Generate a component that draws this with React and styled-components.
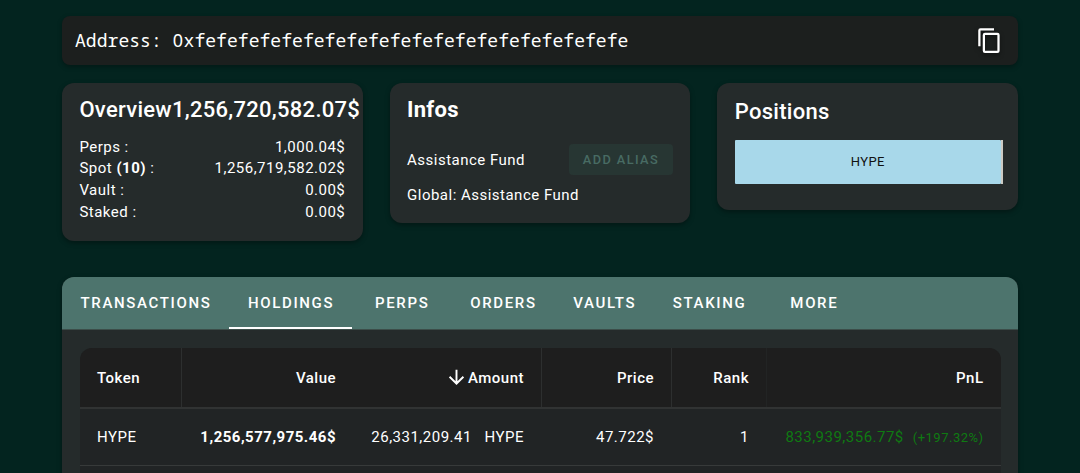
import React from 'react';
import styled, { createGlobalStyle } from 'styled-components';

// Data
const balances = [
  { label: 'Perps :', value: '1,000.04$' },
  { label: 'Spot', count: '(10)', value: '1,256,719,582.02$' },
  { label: 'Vault :', value: '0.00$' },
  { label: 'Staked :', value: '0.00$' },
];

const tabs = ['Transactions', 'Holdings', 'Perps', 'Orders', 'Vaults', 'Staking', 'More'];

const App = () => {
  return (
    <>
      <GlobalStyle />
      <StylePage>
        <StyleAddress>
          <StyleHash>
            Address: <StyleZero>0</StyleZero>xfefefefefefefefefefefefefefefefefefefefe
          </StyleHash>
          <StyleCopy aria-label='Copy address'>
            <svg viewBox='0 0 24 24' width='27' height='27'>
              <path
                fill='currentColor'
                d='M19,21H8V7H19M19,5H8A2,2 0 0,0 6,7V21A2,2 0 0,0 8,23H19A2,2 0 0,0 21,21V7A2,2 0 0,0 19,5M16,1H4A2,2 0 0,0 2,3V17H4V3H16V1Z'
              />
            </svg>
          </StyleCopy>
        </StyleAddress>

        <StyleCards>
          <StyleCard $height={158}>
            <StyleTitle>
              <span>Overview</span>
              <span>1,256,720,582.07$</span>
            </StyleTitle>
            <StyleBalances>
              {balances.map((b) => (
                <StyleBalance key={b.label}>
                  <span>
                    {b.label}
                    {b.count && (
                      <>
                        {' '}
                        <b>{b.count}</b> :
                      </>
                    )}
                  </span>
                  <span>{b.value}</span>
                </StyleBalance>
              ))}
            </StyleBalances>
          </StyleCard>

          <StyleCard $height={140}>
            <StyleTitle $bold>Infos</StyleTitle>
            <StyleAlias>
              <span>Assistance Fund</span>
              <StyleButton disabled>Add alias</StyleButton>
            </StyleAlias>
            <StyleGlobal>Global: Assistance Fund</StyleGlobal>
          </StyleCard>

          <StyleCard $height={127}>
            <StyleTitle $low>Positions</StyleTitle>
            <StyleTreemap>
              <StyleTile>HYPE</StyleTile>
              <StyleSliver />
            </StyleTreemap>
          </StyleCard>
        </StyleCards>

        <StylePanel>
          <StyleTabs>
            {tabs.map((tab) => (
              <StyleTab key={tab} $active={tab === 'Holdings'}>
                {tab}
              </StyleTab>
            ))}
          </StyleTabs>
          <StyleTable>
            <StyleHead>
              <StyleCell $first $line>Token</StyleCell>
              <StyleCell>Value</StyleCell>
              <StyleCell $line>
                <svg viewBox='0 0 24 24' width='23' height='23'>
                  <path
                    fill='currentColor'
                    d='M11,4H13V16L18.5,10.5L19.92,11.92L12,19.84L4.08,11.92L5.5,10.5L11,16V4Z'
                  />
                </svg>
                Amount
              </StyleCell>
              <StyleCell $line>Price</StyleCell>
              <StyleCell $faint>Rank</StyleCell>
              <StyleCell>PnL</StyleCell>
            </StyleHead>
            <StyleRow>
              <StyleCell $first>HYPE</StyleCell>
              <StyleCell>
                <b>1,256,577,975.46$</b>
              </StyleCell>
              <StyleCell>
                26,331,209.41 <StyleUnit>HYPE</StyleUnit>
              </StyleCell>
              <StyleCell>47.722$</StyleCell>
              <StyleCell>1</StyleCell>
              <StyleCell $gain>
                833,939,356.77$ <StylePercent>(+197.32%)</StylePercent>
              </StyleCell>
            </StyleRow>
            <StyleRow />
          </StyleTable>
        </StylePanel>
      </StylePage>
    </>
  );
};

const GlobalStyle = createGlobalStyle`
  * {
    box-sizing: border-box;
  }
  body {
    margin: 0;
    background: #03241f;
    color: #fff;
    font-family: Roboto, sans-serif;
    font-size: 15px;
    letter-spacing: 0.49px;
    overflow: hidden;
  }
`;

const StylePage = styled.div`
  height: 473px;
  padding: 16px 62px 0;
  overflow: hidden;
`;

const StyleAddress = styled.div`
  display: flex;
  align-items: center;
  justify-content: space-between;
  height: 49px;
  padding: 0 15px 0 13px;
  border-radius: 8px;
  background: #1c1f1e;
  box-shadow: 0 2px 5px rgba(0, 0, 0, 0.3);
`;

const StyleHash = styled.span`
  padding-bottom: 2px;
  font-family: 'Droid Sans Mono', 'Noto Sans Mono', 'DejaVu Sans Mono', monospace;
  font-size: 18px;
  line-height: 20px;
  letter-spacing: 0.05px;
`;

// Plain zero, the mono face has a slashed one
const StyleZero = styled.span`
  font-family: 'Noto Sans', sans-serif;
  letter-spacing: 0.6px;
`;

const StyleCopy = styled.button`
  display: flex;
  padding: 0;
  border: 0;
  background: none;
  color: #fff;
  filter: drop-shadow(0 2px 2px rgba(0, 0, 0, 0.5));
`;

const StyleCards = styled.div`
  display: grid;
  grid-template-columns: repeat(3, 1fr);
  column-gap: 27px;
  align-items: start;
  height: 194px;
  margin-top: 18px;
`;

const StyleCard = styled.div`
  min-width: 0;
  height: ${(p) => p.$height}px;
  padding: 0 17.4px;
  border-radius: 12px;
  background: #252b2b;
  box-shadow: 0 2px 5px rgba(0, 0, 0, 0.35);
  white-space: nowrap;
`;

const StyleTitle = styled.div`
  display: flex;
  padding-top: ${(p) => (p.$low ? 14 : 12)}px;
  font-size: 22px;
  font-weight: ${(p) => (p.$bold ? 700 : 500)};
  line-height: 29px;
  letter-spacing: 0.28px;
`;

const StyleBalances = styled.div`
  padding-top: 12.7px;
`;

const StyleBalance = styled.div`
  display: flex;
  justify-content: space-between;
  line-height: 21.7px;
`;

const StyleAlias = styled.div`
  display: flex;
  align-items: center;
  justify-content: space-between;
  padding-top: 20px;
`;

const StyleButton = styled.button`
  width: 104px;
  height: 31px;
  padding: 0;
  border: 0;
  border-radius: 4px;
  background: #273633;
  color: #486b63;
  font-family: inherit;
  font-size: 12.8px;
  font-weight: 500;
  letter-spacing: 1.4px;
  text-transform: uppercase;
`;

const StyleGlobal = styled.div`
  padding-top: 11px;
`;

const StyleTreemap = styled.div`
  display: flex;
  width: 268px;
  height: 44px;
  margin-top: 14px;
`;

const StyleTile = styled.div`
  display: flex;
  flex: 1;
  align-items: center;
  justify-content: center;
  padding-bottom: 1px;
  border-radius: 1px;
  background: #a8d8ea;
  color: #111;
  font-size: 13px;
  letter-spacing: 0.4px;
`;

const StyleSliver = styled.div`
  width: 2px;
  background: #cdcbc4;
`;

const StylePanel = styled.div`
  height: 220px;
  border-radius: 12px 12px 0 0;
  background: #252b2b;
  box-shadow: 0 2px 5px rgba(0, 0, 0, 0.35);
  overflow: hidden;
`;

const StyleTabs = styled.div`
  display: flex;
  height: 53px;
  border-bottom: 1px solid #3c4d49;
  background: #4d746d;
`;

const StyleTab = styled.div`
  display: flex;
  align-items: center;
  justify-content: center;
  position: relative;
  min-width: 99.5px;
  padding: 0 18px 0 18.5px;
  font-weight: 500;
  letter-spacing: 1.65px;
  text-transform: uppercase;
  &::after {
    content: '';
    display: ${(p) => (p.$active ? 'block' : 'none')};
    position: absolute;
    left: 0;
    right: 0;
    bottom: 0;
    height: 2px;
    background: #fff;
  }
`;

const StyleTable = styled.div`
  margin: 18px 17.5px 0 18px;
  border-radius: 12px 12px 0 0;
  background: #212425;
  overflow: hidden;
`;

const StyleRow = styled.div`
  display: grid;
  grid-template-columns: 102px 172px 188px 130px 95px 1fr;
  height: 57px;
  border-bottom: 1px solid #373a3a;
`;

const StyleHead = styled(StyleRow)`
  height: 61px;
  border-bottom: 2px solid #313333;
  background: #1e1e1e;
  font-weight: 500;
`;

const StyleCell = styled.div`
  display: flex;
  align-items: center;
  justify-content: ${(p) => (p.$first ? 'flex-start' : 'flex-end')};
  padding: 0 17px;
  border-right: 1px solid
    ${(p) => (p.$line ? '#2d2f2f' : p.$faint ? '#222424' : 'transparent')};
  color: ${(p) => (p.$gain ? '#0f7a12' : '#fff')};
  white-space: nowrap;
  &:last-child {
    padding-right: 16px;
  }
`;

const StyleUnit = styled.span`
  margin-left: 12.7px;
`;

const StylePercent = styled.span`
  margin-left: 9px;
  font-size: 13px;
`;

export default App;
